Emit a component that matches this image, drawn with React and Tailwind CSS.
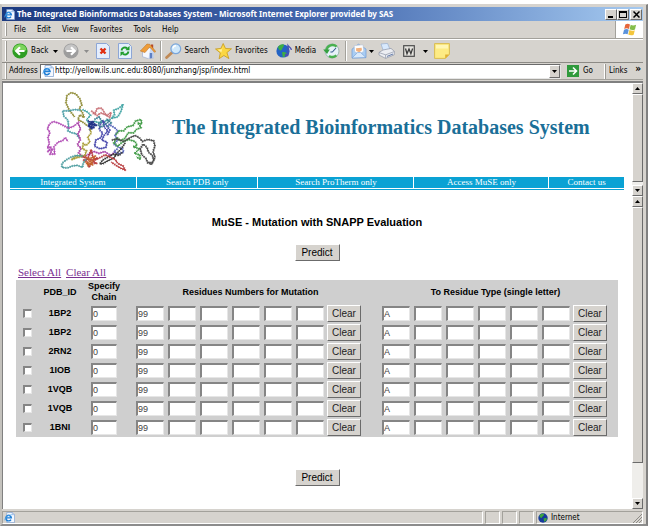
import React, { useState } from "react";

const PDB_IDS = ["1BP2", "1BP2", "2RN2", "1IOB", "1VQB", "1VQB", "1BNI"];

const NAV_LINKS = [
  { label: "Integrated System", width: "w-[20.5%]" },
  { label: "Search PDB only", width: "w-[19.8%]" },
  { label: "Search ProTherm only", width: "w-[25.4%]" },
  { label: "Access MuSE only", width: "w-[22%]" },
  { label: "Contact us", width: "w-[12.3%]" },
];

const emptyRow = (id) => ({
  id,
  checked: false,
  chain: "0",
  numbers: ["99", "", "", "", "", ""],
  letters: ["A", "", "", "", "", ""],
});

const RAISED =
  "border border-t-white border-l-white border-r-[#6b6b6b] border-b-[#6b6b6b] bg-[#d6d3ce]";
const SUNKEN =
  "border-t-2 border-l-2 border-r border-b border-t-[#858585] border-l-[#858585] border-r-[#e6e6e6] border-b-[#e6e6e6] bg-white";

const IeIcon = ({ className }) => (
  <svg viewBox="0 0 12 12" className={className} aria-hidden="true">
    <path d="M3 0.5h6l2.5 2.5v8.5H3z" fill="#f4f8ff" stroke="#7c9ccc" strokeWidth="0.7" />
    <path d="M9 0.5v2.5h2.5" fill="#c4d8f4" stroke="#7c9ccc" strokeWidth="0.5" />
    <path
      d="M7.6 8.2A3 3 0 1 1 8 6.4H2.4"
      fill="none"
      stroke="#1f7fd6"
      strokeWidth="1.6"
    />
    <path d="M0.8 9.2C0 7 5 2.6 8.8 3" fill="none" stroke="#58aef0" strokeWidth="0.7" />
  </svg>
);

const Caret = ({ className = "text-black" }) => (
  <svg viewBox="0 0 5 3" className={`h-[3px] w-[5px] shrink-0 ${className}`} aria-hidden="true">
    <path d="M0 0h5L2.5 3z" fill="currentColor" />
  </svg>
);

const Grip = () => (
  <span className="w-[2px] self-stretch border-r border-l border-r-[#9c9a94] border-l-white" />
);

const Divider = () => (
  <span className="h-[20px] w-[2px] border-r border-l border-r-white border-l-[#a3a19b]" />
);

const ArrowCircle = ({ light, dark, flip }) => (
  <svg viewBox="0 0 16 16" className="size-4 shrink-0" aria-hidden="true">
    <circle cx="8" cy="8" r="7.6" fill={dark} />
    <path d="M1.6 7a6.4 5.8 0 0 1 12.8 0C11 9 5 9 1.6 7z" fill={light} />
    <path
      d={flip ? "M3.5 8h8M8 4.2L11.8 8L8 11.8" : "M12.5 8h-8M8 4.2L4.2 8L8 11.8"}
      fill="none"
      stroke="#fff"
      strokeWidth="2.2"
    />
  </svg>
);

const StopIcon = () => (
  <svg viewBox="0 0 14 16" className="h-4 w-[14px]" aria-hidden="true">
    <path d="M0.5 0.5h10l3 3v12h-13z" fill="#e4eefd" stroke="#8da6d6" />
    <path d="M4.5 5.5l5 5M9.5 5.5l-5 5" stroke="#df2e12" strokeWidth="2.4" />
  </svg>
);

const RefreshIcon = () => (
  <svg viewBox="0 0 14 16" className="h-4 w-[14px]" aria-hidden="true">
    <path d="M0.5 0.5h10l3 3v12h-13z" fill="#e4f0fb" stroke="#8da6d6" />
    <path d="M3.5 7.5C4 4.5 7 3.8 9.3 5.2M10.5 8.5c-.5 3-3.5 3.7-5.8 2.3" fill="none" stroke="#1f9c2c" strokeWidth="1.9" />
    <path d="M11.5 2.8v4.4H7.4zM2.5 13.2V8.8h4.1z" fill="#1f9c2c" />
  </svg>
);

const HomeIcon = () => (
  <svg viewBox="0 0 16 16" className="size-4" aria-hidden="true">
    <path d="M11 1.5h2.2v4H11z" fill="#b5482a" />
    <path d="M2.5 7.5l6-3.5 5 4v7l-5 .7-6-2z" fill="#f6f8fd" stroke="#94a5cc" strokeWidth="0.6" />
    <path d="M8.5 15.6l5.2-.8V8L10.5 4z" fill="#c9d7f1" />
    <path d="M0.3 8L7 1l3 .4 5.8 7.2-1.4.7L9.7 4 5 9.6z" fill="#ee9d3a" stroke="#b96a1b" strokeWidth="0.5" />
    <path d="M9.8 10h2.4v5l-2.4.4z" fill="#5e7fc2" />
  </svg>
);

const SearchIcon = () => (
  <svg viewBox="0 0 17 16" className="h-4 w-[17px]" aria-hidden="true">
    <path d="M7 9.5L1.6 14.5" stroke="#c08a56" strokeWidth="2.8" strokeLinecap="round" />
    <circle cx="10.8" cy="5.8" r="4.9" fill="#cfe8fb" stroke="#7aa6da" strokeWidth="1.2" />
    <path d="M8 5.5a3 3 0 0 1 3-2.7" stroke="#fff" strokeWidth="1.4" fill="none" />
  </svg>
);

const StarIcon = () => (
  <svg viewBox="0 0 17 16" className="h-4 w-[17px]" aria-hidden="true">
    <path
      d="M8.2.5l2.3 5 6 .3-4.6 3.8 2 6-5-3.1-4.8 3.2 1.2-5.8L.5 6l5.4-.6z"
      fill="#fbd743"
      stroke="#c79a1c"
      strokeWidth="0.8"
    />
    <path d="M8 2.5L6.8 6.3l-4 .4 3.6 2.5z" fill="#fff2a6" />
  </svg>
);

const MediaIcon = () => (
  <svg viewBox="0 0 17 16" className="h-4 w-[17px]" aria-hidden="true">
    <circle cx="7" cy="8" r="6.6" fill="#2463c4" />
    <path d="M2 4c2-3 5-3 6-2.3C8 4 6 5 5.6 7 4 8 2.6 7 2 4zM6 9.5c2-1 4.5 0 4.8 1.5C10 13 8 14.4 6.8 14z" fill="#3fae43" />
    <path d="M12 11.5V2.6c1 1.7 3 1.7 3.4 4.4" fill="none" stroke="#4a4fb4" strokeWidth="1.3" />
    <ellipse cx="10.6" cy="12" rx="2" ry="1.6" fill="#4a4fb4" />
  </svg>
);

const HistoryIcon = () => (
  <svg viewBox="0 0 17 16" className="h-4 w-[17px]" aria-hidden="true">
    <circle cx="9" cy="8" r="7" fill="#e6f1f8" stroke="#8aa9a4" strokeWidth="0.8" />
    <path d="M13.6 3.6A6.2 6.2 0 0 0 3.4 7M13.4 12.4A6.2 6.2 0 0 1 6 13" fill="none" stroke="#49b04f" strokeWidth="2.4" />
    <path d="M0.2 6.4h6.6L4 11z" fill="#35a03f" />
    <path d="M9.4 9L13 5M9.4 9H7.4" stroke="#35588c" strokeWidth="1.1" />
  </svg>
);

const MailIcon = () => (
  <svg viewBox="0 0 16 16" className="size-4" aria-hidden="true">
    <path d="M1 6.2L7.4 1.2 15 6v8.6L1 15z" fill="#a9cdf3" stroke="#6f9ad3" strokeWidth="0.7" />
    <path d="M3.2 2.6l8.8-.8.8 6.4-4.6 3-4.6-2.6z" fill="#fdfdfd" stroke="#a8b8d0" strokeWidth="0.5" />
    <path d="M5 5.2l5.6-.5.3 2.5-2.6 2L5.2 8z" fill="#f2b07c" />
    <path d="M1 15l5.6-5.5h3L15 14.6z" fill="#d8e9fb" stroke="#6f9ad3" strokeWidth="0.6" />
  </svg>
);

const PrintIcon = () => (
  <svg viewBox="0 0 17 16" className="h-4 w-[17px]" aria-hidden="true">
    <path d="M3 1l6.5-.6 2.8 6.8-6.6 1.6z" fill="#d8e9fd" stroke="#8fa8cf" strokeWidth="0.6" />
    <path d="M1 9.5L5 7l8-1.6 3.4 3-.2 3.4-8.6 3.6L1 12z" fill="#eceef3" stroke="#8c93a5" strokeWidth="0.7" />
    <path d="M1 9.6l6.6 2.2 8.6-3.2M7.6 11.8v3.4" fill="none" stroke="#8c93a5" strokeWidth="0.7" />
    <path d="M9 13.4l6-2.4" stroke="#6279a8" strokeWidth="1" />
  </svg>
);

const WordIcon = () => (
  <svg viewBox="0 0 12 12" className="size-3" aria-hidden="true">
    <rect x="0.7" y="0.7" width="10.6" height="10.6" fill="#e6e4df" stroke="#4c4c4c" strokeWidth="1.2" />
    <path d="M2.5 3.5l1.5 5.2L6 4l1.9 4.7L9.6 3.5" fill="none" stroke="#3c3c3c" strokeWidth="1.3" />
  </svg>
);

const NoteIcon = () => (
  <svg viewBox="0 0 16 16" className="size-4" aria-hidden="true">
    <path d="M0.6 0.6h14.8v10.8l-4 4H0.6z" fill="#fdeb84" stroke="#d8b846" strokeWidth="0.9" />
    <path d="M15.2 11.4h-4v4z" fill="#dfae31" />
    <path d="M2 2h12v3.5H2z" fill="#fff6b4" />
  </svg>
);

const WindowsFlag = () => (
  <svg viewBox="0 0 15 14" className="h-[13px] w-[15px]" aria-hidden="true">
    <path d="M3 1.6C5 .4 6.6.8 8 1.6L6.9 6.4C5.4 5.6 3.8 5.4 1.8 6.4z" fill="#e5673c" />
    <path d="M8.8 2C10.4 3 12.4 3 14.6 2l-1.2 4.9c-2 1-4 .8-5.8-.1z" fill="#84bd4b" />
    <path d="M1.6 7.2c1.9-1 3.6-.9 5.1 0l-1.2 4.9c-1.5-.8-3.100-.8-5.100 0z" fill="#5b93dc" />
    <path d="M7.4 7.6c1.8 1 3.8 1.1 5.8.2L12 12.6c-2 1-4 .8-5.8-.2z" fill="#f4c63c" />
  </svg>
);

const GlobeIcon = () => (
  <svg viewBox="0 0 10 10" className="size-[10px]" aria-hidden="true">
    <circle cx="5" cy="5" r="4.7" fill="#173a9c" />
    <path d="M1.5 2.5C3 .5 5.5.6 6 1.2 6 3 4 3.5 3.6 5 2.5 5 1.5 4 1.5 2.5zM5.5 5.5c1.5-1 3-.5 3.5.5-.5 1.5-1.5 2.5-2.7 2.7z" fill="#3da63c" />
  </svg>
);

// Backbone traces of the superimposed chains
const CHAINS = [
  { color: "#8f8b34", d: "M222 110L205 88 196 68 199 46 212 37 226 41 238 56 244 74 236 84 246 98 251 112 238 104 232 118 250 128 262 138" },
  { color: "#4a9da5", d: "M240 90L222 88 204 92 186 92 190 108 202 120 204 140 202 152 214 158 226 160 236 174" },
  { color: "#3fa3a3", d: "M246 88L262 96 270 106 258 118 266 130 282 124 300 128 316 122 330 118 342 104 340 90 356 84 368 72 362 92 352 110 334 114" },
  { color: "#c86f74", d: "M272 92L284 100 290 84 304 84 312 98 320 106 332 96 328 112 316 104 300 98 290 106 276 98" },
  { color: "#1f2f86", d: "M262 122L276 128 262 138 280 142 268 148 276 132 290 136 264 130 270 146 284 134 276 122 266 140" },
  { color: "#b04ab4", d: "M236 124L220 138 204 144 184 134 172 128 158 124 146 132 140 146 148 156 142 172 146 190 140 204 152 200 142 214 156 206 148 222 162 222 160 200 172 186 186 182 194 172 202 184" },
  { color: "#a83ea4", d: "M232 128L240 146 232 162 240 178 230 194 242 204 234 218 246 230 262 224 280 214 296 220 312 214 330 226 346 214" },
  { color: "#a79c34", d: "M268 146L272 158 262 172 268 186 256 196 248 190 246 206 258 212 252 228 232 232 214 238 226 228 246 226" },
  { color: "#4444aa", d: "M300 130L296 148 306 158 302 172 286 180 282 198 298 206 316 202 320 186 304 180 312 164 322 152 312 142 306 120 320 138 328 150 320 166" },
  { color: "#3c7f94", d: "M282 118L296 110 304 124 292 132 300 142 314 132 326 124 318 116 332 128 322 140" },
  { color: "#5a68bc", d: "M324 132L342 142 352 152 344 166 352 180 340 192 352 200 366 206 370 216 352 222 340 214 352 206" },
  { color: "#3f9a44", d: "M346 164L356 152 370 152 380 140 398 136 406 122 422 118 424 132 412 128 422 142 408 148 400 158 384 158 372 176 358 182 350 172 340 188 352 198 366 186 384 178 404 184 410 196 398 200 418 206 402 220 418 224 420 238 408 230" },
  { color: "#454545", d: "M334 180L350 176 370 184 390 172 404 166 416 172 426 184 442 178 460 182 464 198 458 214 464 232 456 248 442 248 436 234 424 224 420 206 428 192 440 202 444 216 456 226 460 240 452 254 444 246" },
  { color: "#333333", d: "M374 188L364 204 348 222 340 234 322 242 308 250 298 252 306 240 324 230 340 222 356 226 366 216" },
  { color: "#b8393c", d: "M246 230L262 236 272 208 278 236 292 234 276 242 288 250 272 248 266 262 260 244 250 240 264 238 282 240 300 232 314 224 330 232 344 238 352 250 368 258 374 270 360 264 344 254 332 246" },
  { color: "#c4632c", d: "M254 228L268 244 258 250 276 254 266 236 284 228 274 246 262 256 254 244" },
  { color: "#4e9ea0", d: "M246 228L226 226 210 232 196 240 184 250 184 262 200 264 214 258 230 256 246 262 248 248 258 236" },
];

const ProteinLogo = () => (
  <svg viewBox="136 30 334 245" className="h-[82px] w-[111px] shrink-0" role="img" aria-label="Protein chains">
    {CHAINS.map((chain, i) => (
      <g key={i} fill="none" stroke={chain.color} strokeLinejoin="round">
        <path d={chain.d} strokeWidth="3" />
        <path d={chain.d} strokeWidth="7" strokeDasharray="3 4" opacity="0.8" />
      </g>
    ))}
  </svg>
);

const ScrollButton = ({ up }) => (
  <button
    type="button"
    aria-label={up ? "Scroll up" : "Scroll down"}
    className={`flex h-[11px] w-full shrink-0 items-center justify-center ${RAISED}`}>
    <Caret className={up ? "rotate-180" : ""} />
  </button>
);

const ScrollBar = ({ thumb }) => (
  <div className="flex w-[11px] shrink-0 flex-col bg-[#efeeeb]">
    <ScrollButton up />
    <div className="flex-1">
      <div className={`${thumb} ${RAISED}`} />
    </div>
    <ScrollButton />
  </div>
);

const TitleBar = () => (
  <header className="flex h-[14px] items-center bg-linear-to-r from-[#1c3a80] via-[#4468ae] to-[#a6caf0] pr-px pl-[2px]">
    <IeIcon className="mr-[2px] size-[11px] shrink-0" />
    <h1 className="flex-1 truncate font-['Noto_Sans','Open_Sans',sans-serif] text-[8px] leading-[14px] font-bold text-white">
      The Integrated Bioinformatics Databases System - Microsoft Internet Explorer provided by SAS
    </h1>
    <div className="flex">
      <button type="button" aria-label="Minimize" className={`flex h-[11px] w-[12px] items-end px-[2px] pb-px ${RAISED}`}>
        <span className="h-[2px] w-[5px] bg-black" />
      </button>
      <button type="button" aria-label="Maximize" className={`flex h-[11px] w-[12px] items-center justify-center ${RAISED}`}>
        <span className="h-[7px] w-[8px] border border-t-2 border-black" />
      </button>
      <button type="button" aria-label="Close" className={`ml-px flex h-[11px] w-[12px] items-center justify-center ${RAISED}`}>
        <svg viewBox="0 0 7 7" className="size-[7px]" aria-hidden="true">
          <path d="M0.5 0.5l6 6M6.5 0.5l-6 6" stroke="#000" strokeWidth="1.5" />
        </svg>
      </button>
    </div>
  </header>
);

const MenuBar = () => (
  <div className="flex h-[18px] items-stretch border-b border-[#a3a19b] pl-[3px]">
    <div className="my-[2px] flex">
      <Grip />
    </div>
    <nav className="flex flex-1 items-center gap-[11px] pl-[7px]">
      {["File", "Edit", "View", "Favorites", "Tools", "Help"].map((item) => (
        <button key={item} type="button">
          {item}
        </button>
      ))}
    </nav>
    <div className="flex w-[28px] items-center justify-center border-l border-[#a3a19b] bg-white">
      <WindowsFlag />
    </div>
  </div>
);

const Toolbar = () => (
  <div className="flex h-[24px] items-center border-t border-b border-t-white border-b-[#8c8a85] py-px pl-[3px]">
    <Grip />
    <button type="button" className="ml-[5px] flex items-center gap-[3px]">
      <ArrowCircle light="#7cd45c" dark="#2f9e24" />
      Back
      <span className="ml-[2px]">
        <Caret />
      </span>
    </button>
    <button type="button" aria-label="Forward" className="ml-[5px] flex items-center gap-[5px]">
      <ArrowCircle light="#c4c4c4" dark="#9d9d9d" flip />
      <Caret className="text-[#8c8c8c]" />
    </button>
    <div className="ml-[7px] flex items-center gap-2">
      <button type="button" aria-label="Stop"><StopIcon /></button>
      <button type="button" aria-label="Refresh"><RefreshIcon /></button>
      <button type="button" aria-label="Home"><HomeIcon /></button>
    </div>
    <div className="ml-[4px] flex items-center gap-[3px]">
      <Divider />
      <button type="button" className="flex items-center gap-[2px]"><SearchIcon />Search</button>
    </div>
    <button type="button" className="ml-[6px] flex items-center gap-[3px]"><StarIcon />Favorites</button>
    <button type="button" className="ml-[8px] flex items-center gap-[2px]"><MediaIcon />Media</button>
    <button type="button" aria-label="History" className="mr-[5px] ml-[7px]"><HistoryIcon /></button>
    <Divider />
    <button type="button" aria-label="Mail" className="ml-[4px] flex items-center gap-[2px]"><MailIcon /><Caret /></button>
    <button type="button" aria-label="Print" className="ml-[4px]"><PrintIcon /></button>
    <button type="button" aria-label="Edit with Word" className="ml-[8px] flex items-center gap-[8px]"><WordIcon /><Caret /></button>
    <button type="button" aria-label="Notes" className="ml-[6px]"><NoteIcon /></button>
  </div>
);

const AddressBar = () => (
  <div className="flex h-[17px] items-center border-b border-[#a3a19b] pl-[3px]">
    <Grip />
    <label htmlFor="address" className="ml-[2px] w-[31px]">
      Address
    </label>
    <div className="flex h-[15px] flex-1 items-center border border-t-[#6b6b6b] border-l-[#6b6b6b] border-r-[#e6e6e6] border-b-[#e6e6e6] bg-white">
      <IeIcon className="mx-px size-[12px] shrink-0" />
      <input
        id="address"
        type="text"
        defaultValue="http://yellow.ils.unc.edu:8080/junzhang/jsp/index.html"
        className="min-w-0 flex-1 bg-transparent outline-none"
      />
      <button type="button" aria-label="Show addresses" className={`flex h-[13px] w-[11px] items-center justify-center ${RAISED}`}>
        <Caret />
      </button>
    </div>
    <button type="button" className="ml-[6px] flex items-center gap-1">
      <svg viewBox="0 0 12 12" className="size-3" aria-hidden="true">
        <rect width="12" height="12" fill="#2f9a3c" />
        <path d="M2 6h7M6 2.5L9.500 6L6 9.500" fill="none" stroke="#fff" strokeWidth="1.6" />
      </svg>
      Go
    </button>
    <div className="ml-[11px] flex h-[15px] w-[39px] items-center gap-[3px]">
      <Grip />
      <button type="button" className="flex flex-1 items-center justify-between pr-[2px]">
        Links
        <span className="pb-[4px] text-[10px] leading-[8px] font-bold">»</span>
      </button>
    </div>
  </div>
);

const SiteHeader = () => (
  <section className="flex">
    <div className="min-w-0 flex-1 pt-[7px] pr-[8px] pb-[6px] pl-[7px]">
      <div className="flex items-center pb-[5px] pl-[36px]">
        <ProteinLogo />
        <h2 className="-mt-[8px] ml-[15px] text-[20px] leading-6 font-bold whitespace-nowrap text-[#1a6f98]">
          The Integrated Bioinformatics Databases System
        </h2>
      </div>
      <nav className="flex border-b border-[#0aa2d4] bg-white pb-px text-[9px] leading-[11px]">
        {NAV_LINKS.map((link, i) => (
          <a
            key={link.label}
            href="#"
            className={`${link.width} ${i > 0 ? "border-l border-white" : ""} bg-[#0aa2d4] text-center whitespace-nowrap text-white`}>
            {link.label}
          </a>
        ))}
      </nav>
    </div>
    <ScrollBar thumb="h-[88px]" />
  </section>
);

const PredictButton = () => (
  <button
    type="submit"
    className={`h-[17px] w-[45px] font-['Liberation_Sans',Arial,sans-serif] text-[10px] leading-[14px] ${RAISED}`}>
    Predict
  </button>
);

const FieldGroup = ({ label, values, onChange, onClear }) => (
  <div className="flex items-center gap-1">
    {values.map((value, i) => (
      <input
        key={i}
        type="text"
        aria-label={`${label} ${i + 1}`}
        value={value}
        onChange={(e) => onChange(i, e.target.value)}
        className={`h-[15px] w-0 min-w-0 flex-1 text-[9px] text-[#444] outline-none ${SUNKEN}`}
      />
    ))}
    <button
      type="button"
      onClick={onClear}
      className={`-ml-px h-[17px] w-[34px] shrink-0 text-[10px] leading-[14px] text-[#222] ${RAISED}`}>
      Clear
    </button>
  </div>
);

const MutationForm = () => {
  const [rows, setRows] = useState(PDB_IDS.map(emptyRow));

  const updateRow = (index, changes) => {
    setRows(rows.map((row, i) => (i === index ? { ...row, ...changes } : row)));
  };

  const updateValue = (index, field, position, value) => {
    const values = [...rows[index][field]];
    values[position] = value;
    updateRow(index, { [field]: values });
  };

  const setAll = (e, checked) => {
    e.preventDefault();
    setRows(rows.map((row) => ({ ...row, checked })));
  };

  return (
    <form
      onSubmit={(e) => e.preventDefault()}
      className="min-w-0 flex-1 pt-[19px] pr-[14px] pb-[23px] pl-[13px]">
      <h3 className="text-center font-['Liberation_Sans',Arial,sans-serif] text-[11px] leading-[14px] font-bold">
        MuSE - Mutation with SNAPP Evaluation
      </h3>
      <div className="flex justify-center pt-[15px] pb-[4px]">
        <PredictButton />
      </div>
      <div className="flex gap-[5px] pb-px pl-[2px] text-[11px] leading-[14px] text-[#7a3090] underline">
        <a href="#" onClick={(e) => setAll(e, true)}>Select All</a>
        <a href="#" onClick={(e) => setAll(e, false)}>Clear All</a>
      </div>
      <table className="w-full table-fixed border-collapse bg-[#cfcfcf] font-['Liberation_Sans',Arial,sans-serif] text-[9px] leading-[11px]">
        <colgroup>
          <col className="w-[24px]" />
          <col className="w-[40px]" />
          <col className="w-[48px]" />
          <col />
          <col />
        </colgroup>
        <thead>
          <tr className="h-[24px]">
            <th aria-label="Selected" />
            <th>PDB_ID</th>
            <th>Specify Chain</th>
            <th className="whitespace-nowrap">Residues Numbers for Mutation</th>
            <th className="whitespace-nowrap">To Residue Type (single letter)</th>
          </tr>
        </thead>
        <tbody>
          {rows.map((row, i) => (
            <tr key={i} className="h-[19px]">
              <td className="pl-[7px]">
                <input
                  type="checkbox"
                  aria-label={`Select ${row.id}`}
                  checked={row.checked}
                  onChange={(e) => updateRow(i, { checked: e.target.checked })}
                  className={`block size-[9px] appearance-none checked:bg-[#333] ${SUNKEN}`}
                />
              </td>
              <th scope="row">{row.id}</th>
              <td className="px-[11px]">
                <input
                  type="text"
                  aria-label={`Chain of ${row.id}`}
                  value={row.chain}
                  onChange={(e) => updateRow(i, { chain: e.target.value })}
                  className={`block h-[15px] w-full text-[9px] text-[#444] outline-none ${SUNKEN}`}
                />
              </td>
              <td className="pr-[12px] pl-[8px]">
                <FieldGroup
                  label="Residue number"
                  values={row.numbers}
                  onChange={(position, value) => updateValue(i, "numbers", position, value)}
                  onClear={() => updateRow(i, { numbers: ["", "", "", "", "", ""] })}
                />
              </td>
              <td className="pr-[11px] pl-[9px]">
                <FieldGroup
                  label="Residue type"
                  values={row.letters}
                  onChange={(position, value) => updateValue(i, "letters", position, value)}
                  onClear={() => updateRow(i, { letters: ["", "", "", "", "", ""] })}
                />
              </td>
            </tr>
          ))}
        </tbody>
      </table>
      <div className="flex justify-center pt-8">
        <PredictButton />
      </div>
    </form>
  );
};

const StatusBar = () => {
  const cell = "border border-t-[#a3a19b] border-l-[#a3a19b] border-r-white border-b-white";
  return (
    <footer className="flex h-[15px] gap-[2px] pt-[2px]">
      <div className={`flex flex-1 items-center pl-px ${cell}`}>
        <IeIcon className="size-[11px]" />
      </div>
      <div className={`w-[15px] ${cell}`} />
      <div className={`w-[15px] ${cell}`} />
      <div className={`w-[15px] ${cell}`} />
      <div className={`flex w-[107px] items-center gap-[3px] pl-px ${cell}`}>
        <GlobeIcon />
        <span className="flex-1">Internet</span>
        <svg viewBox="0 0 9 9" className="size-[9px] self-end" aria-hidden="true">
          <path d="M0 9L9 0M3 9L9 3M6 9L9 6" stroke="#8c8a85" strokeWidth="1" />
        </svg>
      </div>
    </footer>
  );
};

export default function App() {
  return (
    <div className="min-h-screen bg-white pt-[4px] font-['Liberation_Serif','Times_New_Roman',serif] text-black">
      <div className="border-t border-r-2 border-b-2 border-l-2 border-t-[#d6d3ce] border-r-[#808080] border-b-[#8c8c8c] border-l-[#c4c2bd] bg-[#d6d3ce] pt-[2px] pr-[3px]">
        <TitleBar />
        <div className="font-['DejaVu_Sans_Condensed','DejaVu_Sans',sans-serif] text-[8px] leading-[10px]">
          <MenuBar />
          <Toolbar />
          <AddressBar />
        </div>
        <main className="mt-px border-t-2 border-l border-[#808080] bg-white">
          <SiteHeader />
          <div className="flex">
            <MutationForm />
            <ScrollBar thumb="h-[88%]" />
          </div>
        </main>
        <div className="font-['DejaVu_Sans_Condensed','DejaVu_Sans',sans-serif] text-[8px] leading-[10px]">
          <StatusBar />
        </div>
      </div>
    </div>
  );
}
